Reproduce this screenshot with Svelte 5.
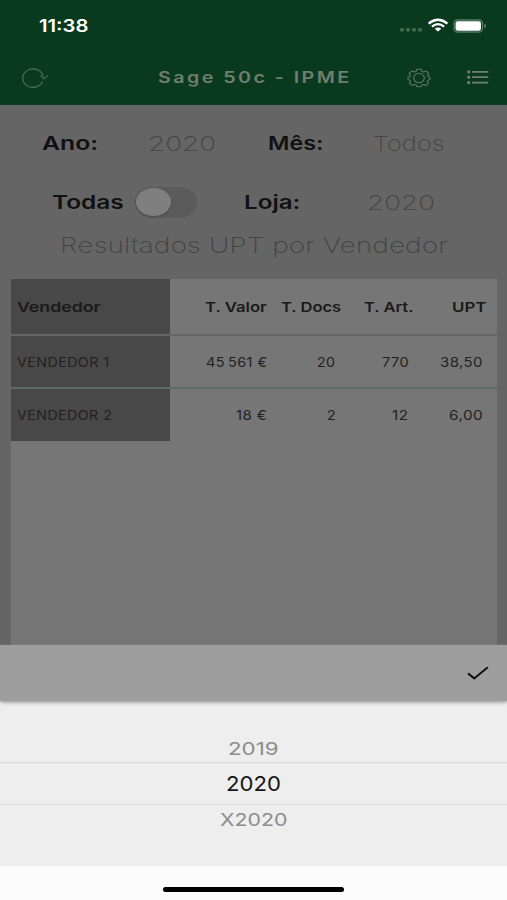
<script>
  const rows = [
    { name: 'VENDEDOR 1', nameW: 93, cells: [['45\u2009561 €', 61], ['20', 19], ['770', 27], ['38,50', 43]] },
    { name: 'VENDEDOR 2', nameW: 95, cells: [['18 €', 31], ['2', 9.5], ['12', 17], ['6,00', 34]] }
  ];
  const heads = [['T. Valor', 62], ['T. Docs', 60], ['T. Art.', 49], ['UPT', 35]];

  // Stretches a label horizontally to the wide proportions of the app's typeface.
  function stretch(node, width) {
    const inner = node.firstElementChild;
    inner.style.transform = `scaleX(${width / inner.offsetWidth})`;
  }
</script>

{#snippet label(text, width, kind)}
  <span class="label {kind}" style="width:{width}px" use:stretch={width}><span>{text}</span></span>
{/snippet}

<div class="phone">
  <header>
    <div class="status">
      {@render label('11:38', 50, 'clock')}
      <svg class="signals" width="90" height="20" viewBox="0 0 90 20">
        <g fill="#3f6b4c">
          <rect x="2" y="12" width="4" height="3.4" rx="1" /><rect x="8" y="12" width="4" height="3.4" rx="1" />
          <rect x="14" y="12" width="4" height="3.4" rx="1" /><rect x="20" y="12" width="4" height="3.4" rx="1" />
        </g>
        <g fill="none" stroke="#fff" stroke-width="2.3">
          <path d="M30.6 7.6Q40 -.1 49.4 7.6" />
          <path d="M33.9 10.7Q40 5.6 46.1 10.7" />
        </g>
        <path d="M36.7 12.7Q40 10.2 43.3 12.7L40 15.6Z" fill="#fff" />
        <rect x="56" y="4" width="28.5" height="12" rx="3.6" fill="none" stroke="#5b7c66" stroke-width="1.3" />
        <rect x="57.5" y="5.3" width="25.5" height="9.4" rx="2.3" fill="#fff" />
        <path d="M86.2 7.8q2 .6 2 2.2t-2 2.2z" fill="#5b7c66" />
      </svg>
    </div>
    <div class="nav">
      <svg class="reload" width="28" height="22" viewBox="0 0 28 22" fill="none" stroke="#53735a" stroke-width="1.1">
        <path d="M21.6 14.6A10.3 9.2 0 1 1 22.2 9.6" />
        <path d="M19.3 8.6l3.6 3.2 3.8-3.5" />
      </svg>
      {@render label('Sage 50c - IPME', 194, 'brand')}
      <svg class="gear" width="24" height="20" viewBox="0 0 24 20" fill="none" stroke="#5f7862" stroke-width="1.1" stroke-linejoin="round">
        <path d="M9.8 1.2H14.2L15 3.5L16.6 4.1L19 3L21.9 5.4L20.6 7.4L21.2 8.8L23 9.2V11.6L21.1 12.3L20.4 13.5L21.5 15.4L18.6 17.6L16.4 16.5L14.8 17L14 18.8H10L9.2 17L7.6 16.5L5.4 17.6L2.5 15.4L3.6 13.5L2.9 12.3L1 11.6V9.2L2.8 8.8L3.4 7.4L2.1 5.4L5 3L7.4 4.1L9 3.5Z" />
        <ellipse cx="12" cy="10" rx="5.3" ry="4.7" />
      </svg>
      <svg class="list" width="24" height="16" viewBox="0 0 24 16" stroke="#70806d" fill="#70806d" stroke-width="1.8">
        <path d="M6 2.8h16.2M6 8.2h16.2M6 13.6h16.2" />
        <g stroke="none"><circle cx="2.7" cy="2.8" r="1.6" /><circle cx="2.7" cy="8.2" r="1.6" /><circle cx="2.7" cy="13.6" r="1.6" /></g>
      </svg>
    </div>
  </header>

  <main>
    <div class="filters first">
      {@render label('Ano:', 56, 'strong')}
      {@render label('2020', 68, 'thin')}
      {@render label('Mês:', 55, 'strong mes')}
      {@render label('Todos', 72, 'thin')}
    </div>
    <div class="filters second">
      {@render label('Todas', 72, 'strong')}
      <div class="switch"><i></i></div>
      {@render label('Loja:', 56, 'strong loja')}
      {@render label('2020', 68, 'thin year')}
    </div>
    <div class="title">{@render label('Resultados UPT por Vendedor', 388, 'thin big')}</div>

    <div class="table">
      <div class="row head">
        <div class="name">{@render label('Vendedor', 84, 'th')}</div>
        {#each heads as [t, w]}<div class="cell">{@render label(t, w, 'th')}</div>{/each}
      </div>
      {#each rows as r}
        <div class="row">
          <div class="name">{@render label(r.name, r.nameW, 'td')}</div>
          {#each r.cells as [t, w]}<div class="cell">{@render label(t, w, 'td')}</div>{/each}
        </div>
      {/each}
    </div>
  </main>

  <section class="sheet">
    <div class="toolbar">
      <svg width="24" height="18" viewBox="0 0 24 18" fill="none" stroke="#111" stroke-width="2">
        <path d="M2 9.4l6.2 5L21.8 3.2" />
      </svg>
    </div>
    <div class="picker">
      <div class="option above">{@render label('2019', 51, 'dim')}</div>
      <div class="option chosen">{@render label('2020', 55, 'selected')}</div>
      <div class="option below">{@render label('X2020', 67, 'dim')}</div>
    </div>
    <div class="home"><i></i></div>
  </section>
</div>

<style>
  :global(body) { margin: 0; }
  .phone { width: 507px; height: 900px; display: flex; flex-direction: column; overflow: hidden; background: #656565; font-family: Inter, 'Liberation Sans', sans-serif; }
  .label { display: block; flex: none; white-space: pre; }
  .label > span { display: inline-block; transform-origin: 0 50%; }
  header { height: 105px; flex: none; background: #0a3a1e; }
  .status { height: 52px; display: flex; align-items: center; justify-content: space-between; padding: 0 19px 0 39px; }
  .clock { font-size: 17px; font-weight: 600; color: #fff; }
  .nav { height: 50px; display: flex; align-items: center; }
  .reload { margin: 2px 0 0 21px; }
  .brand { margin: -1px 0 0 109px; font-size: 16px; font-weight: 600; letter-spacing: 2px; color: #707e70; }
  .gear { margin: 2px 0 0 55px; }
  .list { margin-left: 35px; }
  main { height: 540px; flex: none; display: flex; flex-direction: column; }
  .filters { display: flex; align-items: center; flex: none; }
  .first { height: 76px; padding-left: 42px; gap: 50px; }
  .second { height: 42px; padding-left: 52px; }
  .mes { margin-left: 2px; }
  .strong { font-size: 19px; font-weight: 600; color: #111; }
  .thin { font-size: 20.5px; font-weight: 200; color: #444; }
  .big { font-size: 22px; }
  .switch { width: 62px; height: 31px; margin-left: 11px; border-radius: 18px/16px; background: #5b5b5b; display: flex; align-items: center; }
  .switch i { width: 35px; height: 28px; margin-left: 1px; border-radius: 50%; background: #7f7f7f; box-shadow: 0 1px 2px #4c4c4c; }
  .loja { margin-left: 47px; }
  .year { margin-left: 67px; }
  .title { height: 44px; display: flex; align-items: center; padding-left: 60px; flex: none; }
  .table { width: 486px; flex: 1; margin: 12px 0 0 11px; background: #767676; }
  .row { box-sizing: border-box; display: grid; grid-template-columns: 158.5px 97.5px 69px 73px 74px; height: 53px; border-bottom: 2px solid #5c6b65; }
  .head { height: 57px; border-bottom-color: #626965; }
  .row:last-child { border: 0; height: 52px; }
  .name { background: #484848; display: flex; align-items: center; padding-left: 6px; }
  .cell { display: flex; align-items: center; justify-content: flex-end; }
  .head .cell { padding-top: 1px; }
  .head .cell:nth-child(3) { margin-right: -5px; }
  .head .cell:nth-child(4) { margin-right: -4px; }
  .head .cell:nth-child(5) { margin-right: -4px; }
  .th { font-size: 13.5px; font-weight: 600; color: #1a1a1a; }
  .td { font-size: 13.5px; font-weight: 400; letter-spacing: .4px; color: #222; }
  .sheet { flex: 1; display: flex; flex-direction: column; background: #fbfbfb; }
  .toolbar { height: 56px; flex: none; display: flex; align-items: center; justify-content: flex-end; padding-right: 17px; background: #9e9e9e; box-shadow: 0 1px 4px #888; z-index: 1; }
  .picker { height: 165px; flex: none; background: #eee; }
  .option { display: flex; justify-content: center; align-items: center; box-sizing: border-box; }
  .above { height: 28px; margin-top: 33px; }
  .chosen { height: 43px; border: solid #dadada; border-width: 1px 0; }
  .below { height: 28px; }
  .dim { font-size: 17.5px; color: #8c8c8c; }
  .selected { font-size: 20.5px; color: #151515; }
  .home { flex: 1; display: flex; justify-content: center; align-items: flex-end; }
  .home i { width: 181px; height: 5px; margin-bottom: 8px; border-radius: 3px; background: #000; }
</style>
